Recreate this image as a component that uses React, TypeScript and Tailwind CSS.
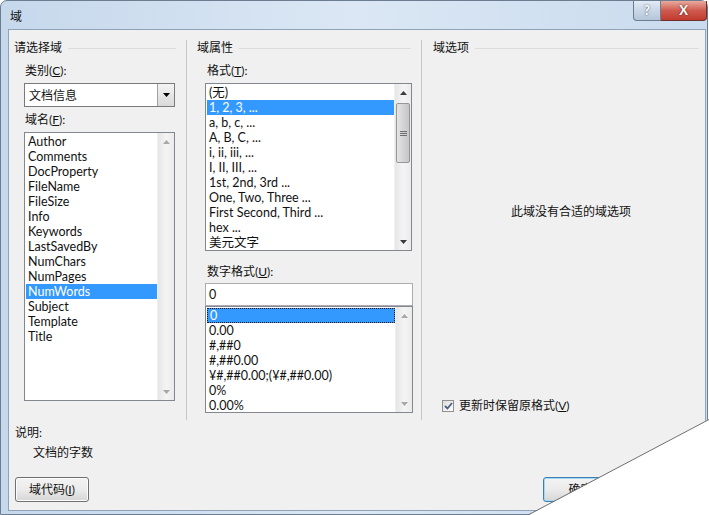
import React from 'react';

const fieldNames = [
  'Author', 'Comments', 'DocProperty', 'FileName', 'FileSize', 'Info', 'Keywords',
  'LastSavedBy', 'NumChars', 'NumPages', 'NumWords', 'Subject', 'Template', 'Title',
];

const formats = [
  '(无)', '1, 2, 3, ...', 'a, b, c, ...', 'A, B, C, ...', 'i, ii, iii, ...', 'I, II, III, ...',
  '1st, 2nd, 3rd ...', 'One, Two, Three ...', 'First Second, Third ...', 'hex ...', '美元文字',
];

const numberFormats = ['0', '0.00', '#,##0', '#,##0.00', '¥#,##0.00;(¥#,##0.00)', '0%', '0.00%'];

function Arrow({ up, disabled }: { up?: boolean; disabled?: boolean }) {
  return (
    <svg width="7" height="4" viewBox="0 0 7 4">
      <path d={up ? 'M0 4 L3.5 0 L7 4 Z' : 'M0 0 L3.5 4 L7 0 Z'} fill={disabled ? '#a8a8a8' : '#3a3a3a'} />
    </svg>
  );
}

function ScrollBar({ thumb, disabled }: { thumb?: boolean; disabled?: boolean }) {
  return (
    <div className="w-[17px] h-full flex flex-col bg-gradient-to-r from-[#e6e6e6] via-[#f4f4f4] to-[#ebebeb] border-l border-[#f0f0f0]">
      <div className="h-[17px] flex items-center justify-center">
        <Arrow up disabled={disabled} />
      </div>
      <div className="flex-1 px-[1px]">
        {thumb && (
          <div className="mt-[2px] h-[60px] rounded-[2px] border border-[#979797] bg-gradient-to-r from-[#e5e5e5] via-[#d4d4d4] to-[#c6c6c6] flex flex-col items-center justify-center gap-[1px]">
            <div className="w-[7px] h-px bg-[#6d6d6d]" />
            <div className="w-[7px] h-px bg-[#6d6d6d]" />
            <div className="w-[7px] h-px bg-[#6d6d6d]" />
          </div>
        )}
      </div>
      <div className="h-[17px] flex items-center justify-center">
        <Arrow disabled={disabled} />
      </div>
    </div>
  );
}

function ListBox({
  items, selected, className, thumb, disabled, focus,
}: {
  items: string[]; selected: number; className: string; thumb?: boolean; disabled?: boolean; focus?: boolean;
}) {
  return (
    <div className={`border border-[#828790] bg-white flex overflow-hidden ${className}`}>
      <div className="flex-1 pt-[1px] pl-[1px] overflow-hidden text-[12.5px]">
        {items.map((item, i) => (
          <div
            key={item}
            className={`h-[15px] pl-[2px] whitespace-nowrap ${
              i === selected ? 'bg-[#3399ff] text-white' : ''
            } ${i === selected && focus ? 'border border-dotted border-[#1a1a1a] pl-[1px] leading-[13px]' : ''}`}
          >
            {item}
          </div>
        ))}
      </div>
      <ScrollBar thumb={thumb} disabled={disabled} />
    </div>
  );
}

function Heading({ text }: { text: string }) {
  return (
    <div className="flex items-center h-[15px] gap-[6px]">
      <span className="whitespace-nowrap">{text}</span>
      <div className="flex-1 h-px bg-[#dcdcdc] mt-[1px]" />
    </div>
  );
}

function Button({ children, def, className = '' }: { children: React.ReactNode; def?: boolean; className?: string }) {
  return (
    <div
      className={`h-[25px] rounded-[3px] border flex items-center justify-center bg-gradient-to-b from-[#f3f3f3] via-[#ebebeb] to-[#d6d6d6] ${
        def ? 'border-[#3c7fb1] shadow-[inset_0_0_0_1px_#a6d8f5]' : 'border-[#707070] shadow-[inset_0_0_0_1px_#fcfcfc]'
      } ${className}`}
    >
      {children}
    </div>
  );
}

export default function App() {
  return (
    <div className="relative w-[709px] h-[515px] overflow-hidden bg-white text-[12px] leading-[15px] text-[#111] font-['Lato','Noto_Sans_CJK_SC',sans-serif]">
      <div className="w-[708px] h-full flex flex-col rounded-tl-[7px] rounded-tr-[7px] border border-[#6c7d92] bg-gradient-to-r from-[#c6d8ec] via-[#dbe7f4] to-[#c9dbee]">
        {/* Title bar */}
        <div className="h-[28px] flex items-start">
          <div className="pl-[9px] pt-[8px]">域</div>
          <div className="ml-auto flex">
            <div className="w-[28px] h-[20px] rounded-bl-[4px] border border-t-0 border-[#6c7d92] bg-gradient-to-b from-[#e3ebf5] via-[#c9d6e6] to-[#b5c6da] flex items-center justify-center text-white font-bold text-[13px] [text-shadow:0_0_2px_#33475e]">
              ?
            </div>
            <div className="w-[46px] h-[20px] rounded-br-[4px] border border-t-0 border-l-0 border-[#6e2f2a] bg-gradient-to-b from-[#e9a99e] via-[#cf5a4f] to-[#c23a2e] flex items-center justify-center text-white font-bold text-[13px] [text-shadow:0_0_2px_#4a1510]">
              X
            </div>
          </div>
        </div>

        {/* Body */}
        <div className="flex-1 ml-[7px] mr-[1px] mb-[3px] border border-[#8fa2b8] bg-[#f0f0f0] flex flex-col">
          <div className="h-[390px] pt-[10px] flex">
            {/* Left column */}
            <div className="w-[177px] pl-[5px] pr-[10px] flex flex-col">
              <Heading text="请选择域" />
              <div className="pl-[10px] flex flex-col">
                <div className="mt-[8px] pl-[1px]">类别(<u>C</u>):</div>
                <div className="mt-[5px] w-[151px] h-[24px] border border-[#7a7a7a] bg-white flex">
                  <div className="flex-1 pl-[4px] flex items-center">文档信息</div>
                  <div className="w-[17px] border-l border-[#a0a0a0] bg-gradient-to-b from-[#f4f4f4] to-[#d9d9d9] flex items-center justify-center">
                    <svg width="7" height="4" viewBox="0 0 7 4">
                      <path d="M0 0 L3.5 4 L7 0 Z" fill="#000" />
                    </svg>
                  </div>
                </div>
                <div className="mt-[5px] pl-[1px]">域名(<u>F</u>):</div>
                <ListBox items={fieldNames} selected={10} disabled className="mt-[5px] w-[151px] h-[269px]" />
              </div>
            </div>

            {/* Middle column */}
            <div className="w-[235px] border-l border-[#c5c5c5] pl-[10px] pr-[10px] flex flex-col">
              <Heading text="域属性" />
              <div className="pl-[8px] flex flex-col">
                <div className="mt-[8px] pl-[2px]">格式(<u>T</u>):</div>
                <ListBox items={formats} selected={1} thumb className="mt-[5px] w-[207px] h-[168px]" />
                <div className="mt-[13px] pl-[2px]">数字格式(<u>U</u>):</div>
                <div className="mt-[4px] w-[208px] h-[23px] border border-[#abadb3] bg-white pl-[3px] flex items-center text-[12.5px]">0</div>
                <ListBox items={numberFormats} selected={0} disabled focus className="w-[208px] h-[107px]" />
              </div>
            </div>

            {/* Right column */}
            <div className="flex-1 border-l border-[#c5c5c5] pl-[11px] pr-[6px] flex flex-col">
              <Heading text="域选项" />
              <div className="mt-[149px] pl-[10px] text-center">此域没有合适的域选项</div>
              <div className="mt-[179px] pl-[9px] flex items-center gap-[5px]">
                <div className="w-[12px] h-[12px] border border-[#8f8f8f] bg-gradient-to-br from-[#dcdcdc] to-[#ffffff] flex items-center justify-center">
                  <svg width="9" height="8" viewBox="0 0 9 8">
                    <path d="M1 4 L3.5 6.5 L8 1" fill="none" stroke="#4a5f80" strokeWidth="1.8" />
                  </svg>
                </div>
                <span>更新时保留原格式(<u>V</u>)</span>
              </div>
            </div>
          </div>

          {/* Bottom */}
          <div className="flex flex-col pl-[6px]">
            <div className="mt-[5px]">说明:</div>
            <div className="mt-[5px] pl-[18px]">文档的字数</div>
            <div className="mt-[17px] flex pr-[4px]">
              <Button className="w-[74px]">域代码(<u>I</u>)</Button>
              <div className="ml-auto flex gap-[8px]">
                <Button def className="w-[75px]">确定</Button>
                <Button className="w-[75px]">取消</Button>
              </div>
            </div>
          </div>
        </div>
      </div>

      {/* Torn page corner */}
      <svg className="absolute right-0 bottom-0" width="180" height="96" viewBox="0 0 180 96">
        <polygon points="0,96 180,0 180,96" fill="#ffffff" />
        <line x1="0" y1="95.5" x2="180" y2="0.5" stroke="#6e6e6e" strokeWidth="1" />
      </svg>
    </div>
  );
}
